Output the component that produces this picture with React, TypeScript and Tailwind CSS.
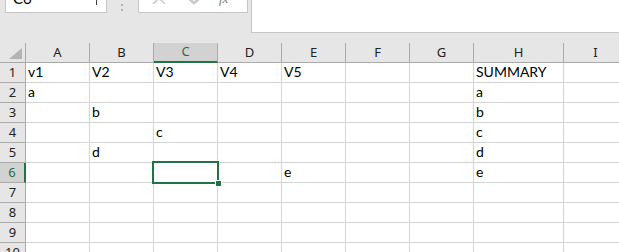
import React from "react";

const cols = ["A", "B", "C", "D", "E", "F", "G", "H", "I"];

const data: Record<number, Record<string, string>> = {
  1: { A: "v1", B: "V2", C: "V3", D: "V4", E: "V5", H: "SUMMARY" },
  2: { A: "a", H: "a" },
  3: { B: "b", H: "b" },
  4: { C: "c", H: "c" },
  5: { B: "d", H: "d" },
  6: { E: "e", H: "e" },
};

const rows = [1, 2, 3, 4, 5, 6, 7, 8, 9, 10];

const App = () => {
  return (
    <div className="relative w-[619px] h-[252px] overflow-hidden bg-[#e6e6e6] font-['Lato',sans-serif] text-black">
      {/* formula bar strip */}
      <div className="flex h-[43px] items-start">
        <div className="ml-[5px] flex h-[13px] w-[102px] items-end justify-between overflow-hidden border-x border-b border-[#c6c6c6] bg-white px-[7px]">
          <span className="mb-[6px] text-[15px] leading-[15px]">C6</span>
          <span className="mb-[7px] mr-[2px] h-[6px] w-[1px] bg-[#444]" />
        </div>
        <div className="ml-[14px] flex h-[12px] w-[3px] flex-col justify-end gap-[3px] pb-[1px]">
          <span className="h-[2px] w-[2px] bg-[#b4b4b4]" />
          <span className="h-[2px] w-[2px] bg-[#b4b4b4]" />
        </div>
        <div className="ml-[14px] flex h-[13px] w-[110px] items-end overflow-hidden border-x border-b border-[#c6c6c6] bg-white">
          <svg width="14" height="8" viewBox="0 0 14 8" className="mb-[8px] ml-[13px]">
            <path d="M1 8 L7 2 L13 8" stroke="#c8c8c8" strokeWidth="1.5" fill="none" />
          </svg>
          <svg width="14" height="8" viewBox="0 0 14 8" className="mb-[7px] ml-[21px]">
            <path d="M1 1 L7 6 L13 1" stroke="#c8c8c8" strokeWidth="2.5" fill="none" />
          </svg>
          <span className="mb-[7px] ml-[18px] font-['Liberation_Serif',serif] text-[13px] italic leading-[13px] text-[#777]">fx</span>
        </div>
        <div className="ml-[3px] h-[33px] flex-1 border-b border-l border-[#c6c6c6] bg-white" />
      </div>

      {/* sheet */}
      <div className="relative grid grid-cols-[26px_64px_64px_64px_64px_64px_64px_64px_90px_64px] grid-rows-[20px_repeat(10,20px)]">
        <div className="flex items-end justify-end border-r border-b border-[#ababab] bg-[#e6e6e6] p-[3px]">
          <svg width="13" height="11" viewBox="0 0 13 11">
            <path d="M13 0 L13 11 L0 11 Z" fill="#b4b4b4" />
          </svg>
        </div>
        {cols.map((c) => (
          <div
            key={c}
            className={
              c === "C"
                ? "flex items-center justify-center border-r border-b-2 border-r-[#ababab] border-b-[#217346] bg-[#d2d2d2] font-['Noto_Sans',sans-serif] text-[13px] text-[#217346]"
                : "flex items-center justify-center border-r border-b border-[#ababab] bg-[#e6e6e6] font-['Noto_Sans',sans-serif] text-[13px] text-[#222]"
            }
          >
            {c}
          </div>
        ))}

        {rows.map((r) => (
          <React.Fragment key={r}>
            <div
              className={
                r === 6
                  ? "flex items-center justify-center border-b border-b-[#ababab] border-r-2 border-r-[#217346] bg-[#d2d2d2] font-['Noto_Sans',sans-serif] text-[13px] text-[#217346]"
                  : "flex items-center justify-center border-r border-b border-[#ababab] bg-[#e6e6e6] font-['Noto_Sans',sans-serif] text-[13px] text-[#222]"
              }
            >
              {r}
            </div>
            {cols.map((c) => (
              <div
                key={c}
                className="flex items-end overflow-visible whitespace-nowrap border-r border-b border-[#d4d4d4] bg-white pb-[2px] pl-[2px] text-[14px] leading-[16px]"
              >
                {data[r]?.[c] ?? ""}
              </div>
            ))}
          </React.Fragment>
        ))}

        {/* active cell C6 */}
        <div className="absolute left-[152px] top-[118px] h-[23px] w-[67px] border-2 border-[#217346]" />
        <div className="absolute left-[215px] top-[137px] h-[7px] w-[7px] border border-white bg-[#217346]" />
      </div>
    </div>
  );
};

export default App;
